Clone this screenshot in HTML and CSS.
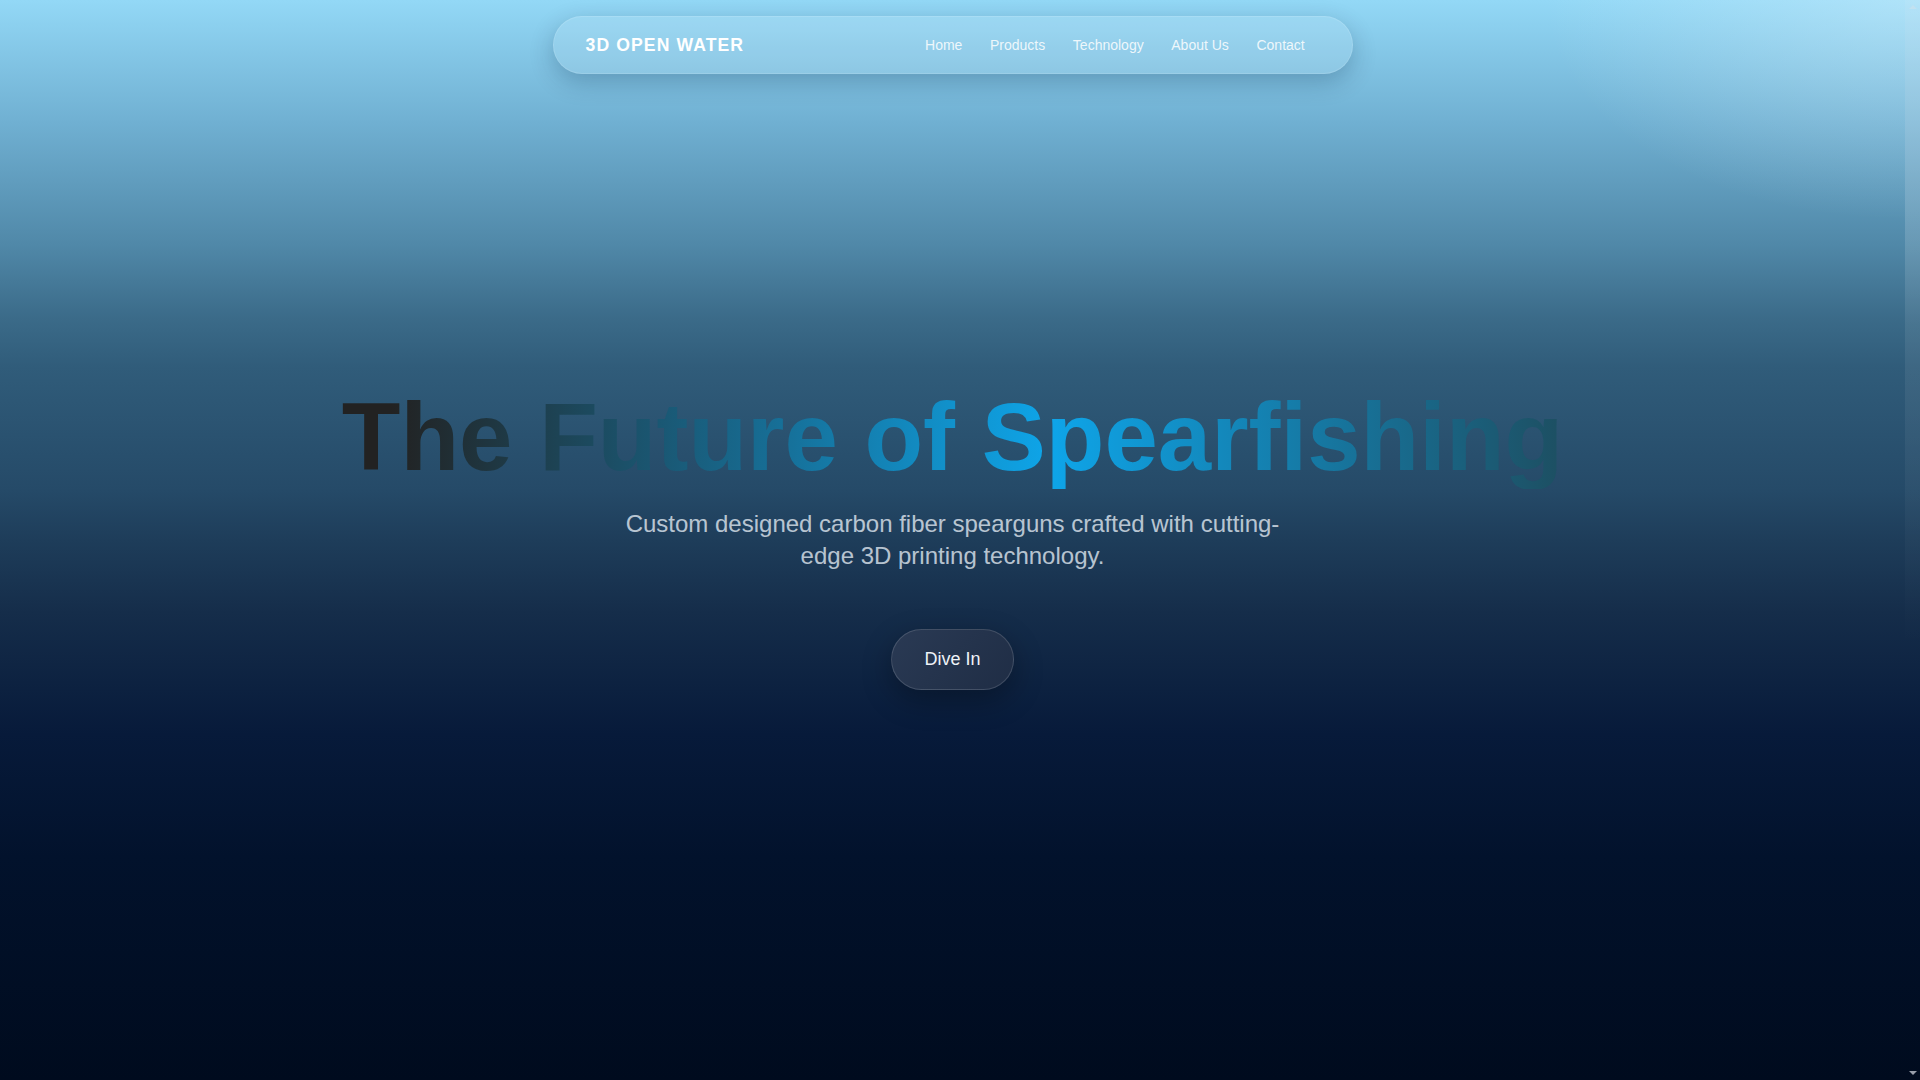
FILE: index.html
```html
<!DOCTYPE html>
<html lang="en">
<head>
<meta charset="utf-8">
<title>3D Open Water</title>
<link rel="stylesheet" href="styles.css">
</head>
<body>
<div class="page">
  <header class="navbar">
    <div class="logo">3D OPEN WATER</div>
    <nav class="nav-links">
      <a href="#">Home</a>
      <a href="#">Products</a>
      <a href="#">Technology</a>
      <a href="#">About Us</a>
      <a href="#">Contact</a>
    </nav>
  </header>
  <main>
    <section class="hero">
      <h1 class="hero-title">The Future of Spearfishing</h1>
      <p class="hero-sub">Custom designed carbon fiber spearguns crafted with cutting-edge 3D printing technology.</p>
      <a class="btn" href="#">Dive In</a>
    </section>
    <section class="next"></section>
  </main>
</div>
<div class="rail" aria-hidden="true">
  <span class="arrow arrow-up"></span>
  <span class="arrow arrow-down"></span>
</div>
</body>
</html>
```

FILE: styles.css
```css
html, body {
  margin: 0;
  height: 100%;
  overflow: hidden;
  background: #000b1e;
}
body {
  display: flex;
  font-family: "Liberation Sans", Arial, sans-serif;
  color: #fff;
}
.page {
  position: relative;
  flex: 1;
  min-width: 0;
  height: 100vh;
  overflow-y: auto;
  background: #000b1e;
}
.rail {
  width: 15px;
  flex: none;
  height: 100vh;
  display: flex;
  flex-direction: column;
  justify-content: space-between;
  align-items: center;
  padding: 5px 0;
  box-sizing: border-box;
  background:
    linear-gradient(180deg, rgba(255,255,255,0.3) 0%, rgba(255,255,255,0.08) 30%, rgba(255,255,255,0) 60%),
    linear-gradient(180deg,
      #93d8f6 0%,
      #70b0d2 11.3%,
      #5088a8 22.7%,
      #3b6b89 29.4%,
      #305c7a 34%,
      #254a68 45.4%,
      #1e3d5a 50%,
      #152d4a 56.7%,
      #071a3a 68%,
      #02122c 79.4%,
      #000b1e 100%);
}
.arrow {
  width: 0;
  height: 0;
  border-left: 4px solid transparent;
  border-right: 4px solid transparent;
}
.arrow-up {
  border-bottom: 4px solid rgba(210,225,235,0.5);
}
.arrow-down {
  border-top: 4px solid rgba(190,195,205,0.8);
}
.navbar {
  position: absolute;
  top: 16px;
  left: 0;
  right: 0;
  margin: 0 auto;
  width: 800px;
  height: 58px;
  box-sizing: border-box;
  padding: 0 32px;
  display: flex;
  align-items: center;
  justify-content: space-between;
  border-radius: 29px;
  background: rgba(255,255,255,0.12);
  border: 1px solid rgba(255,255,255,0.12);
  box-shadow: 0 8px 24px rgba(0,30,60,0.24);
  z-index: 10;
}
.logo {
  font-size: 17.6px;
  font-weight: 700;
  letter-spacing: 1.1px;
  color: #fff;
}
.nav-links {
  display: flex;
  padding-right: 1px;
}
.nav-links a {
  padding: 0 13.8px;
  font-size: 14px;
  color: rgba(255,255,255,0.85);
  text-decoration: none;
}
.hero {
  min-height: 100vh;
  box-sizing: border-box;
  padding-bottom: 6px;
  display: flex;
  flex-direction: column;
  align-items: center;
  justify-content: center;
  text-align: center;
  background:
    radial-gradient(ellipse 360px 220px at 100% 0%, rgba(220,245,255,0.38), rgba(220,245,255,0) 100%),
    linear-gradient(180deg,
      #93d8f6 0%,
      #70b0d2 11.3%,
      #5088a8 22.7%,
      #3b6b89 29.4%,
      #305c7a 34%,
      #254a68 45.4%,
      #1e3d5a 50%,
      #152d4a 56.7%,
      #071a3a 68%,
      #02122c 79.4%,
      #000b1e 100%);
}
.hero-title {
  margin: 0 0 19px;
  font-size: 96px;
  line-height: 1.1;
  font-weight: 700;
  width: fit-content;
  background: linear-gradient(90deg, #222222 4%, #0ea5e9 58%, #1d4f62 100%);
  -webkit-background-clip: text;
  background-clip: text;
  color: transparent;
}
.hero-sub {
  margin: 0 0 57px;
  max-width: 700px;
  font-size: 24px;
  line-height: 1.32;
  color: rgba(226,234,242,0.8);
}
.btn {
  display: inline-block;
  padding: 19.2px 32px;
  font-size: 18px;
  color: #eef2f7;
  text-decoration: none;
  border-radius: 31px;
  background: linear-gradient(135deg, #2a3a54, #1f2d45);
  border: 1px solid rgba(255,255,255,0.14);
  box-shadow: 0 10px 30px rgba(0,0,0,0.3);
}
.next {
  min-height: 100vh;
  background: #000b1e;
}
```
